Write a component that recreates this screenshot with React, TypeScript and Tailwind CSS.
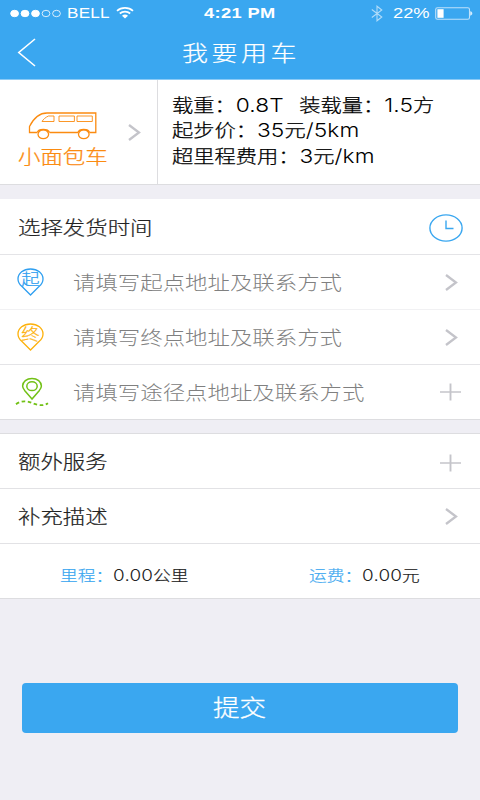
import type { ReactNode } from "react";

/* Wide lettering: glyphs are stretched horizontally from their left edge. */
function Wide({ className = "", children }: { className?: string; children: ReactNode }) {
  return (
    <span className={`inline-block origin-left scale-x-[1.18] whitespace-pre ${className}`}>{children}</span>
  );
}

function Num({ children }: { children: ReactNode }) {
  return <span className="text-[1.07em] leading-none tracking-[0.1px] [-webkit-text-stroke:0]">{children}</span>;
}

function Chevron() {
  return (
    <svg className="block h-[17px] w-[13px]" viewBox="0 0 13 17" fill="none" stroke="#c4c4ca" strokeWidth="2.3">
      <path d="M1 1L11 8.5L1 16" />
    </svg>
  );
}

function Plus() {
  return (
    <svg className="block h-[18px] w-[21px]" viewBox="0 0 21 18" fill="none" stroke="#c4c4ca">
      <path d="M0 9H21" strokeWidth="1.5" />
      <path d="M10.5 0.5V17.5" strokeWidth="1.9" />
    </svg>
  );
}

function Clock() {
  return (
    <svg className="block h-[28px] w-[34px]" viewBox="0 0 34 28" fill="none" stroke="#3aa7f0" strokeWidth="1.4">
      <ellipse cx="17" cy="14" rx="16.1" ry="13.1" />
      <path d="M17 6.5V14.5H24.5" />
    </svg>
  );
}

function LetterPin({ letter, color }: { letter: string; color: string }) {
  return (
    <svg className="block h-[28px] w-[27px]" viewBox="0 0 27 28" fill="none" stroke={color} strokeWidth="1.3">
      <path d="M13.5 27L5 18.6C2.4 16.4 1 14 1 11C1 5.2 6.5 1 13.5 1S26 5.2 26 11C26 14 24.6 16.4 22 18.6Z" />
      <text
        x="11.4"
        y="17.1"
        transform="scale(1.18 1)"
        textAnchor="middle"
        fill={color}
        stroke={color}
        strokeWidth="0.25"
        fontSize="15.5"
      >
        {letter}
      </text>
    </svg>
  );
}

function RoutePin() {
  return (
    <svg className="block h-[30px] w-[34px]" viewBox="0 0 34 30" fill="none" stroke="#72c116" strokeWidth="1.5">
      <path d="M17 22L9.6 13.4C8.3 11.8 7.6 10.7 7.6 9.1C7.6 4.7 11.7 1.4 17 1.4S26.4 4.7 26.4 9.1C26.4 10.7 25.7 11.8 24.4 13.4Z" />
      <ellipse cx="17" cy="9.2" rx="5.2" ry="4.4" />
      <path d="M1 27.2C6 23.5 12 23.8 17 26S28 29.5 33 26.2" strokeWidth="1.8" strokeDasharray="3.6 2.6" />
    </svg>
  );
}

function Van() {
  return (
    <svg className="block h-[29px] w-[69px]" viewBox="0 0 69 29" fill="none" stroke="#fb8b10" strokeWidth="1.3">
      <path d="M9 21.5H1.5V15.5C5 8.5 11 2 19 2H67.8V21.5H61.5M50 21.5H21.5" />
      <ellipse cx="15.3" cy="23.3" rx="5.3" ry="4.4" />
      <ellipse cx="55.8" cy="23.3" rx="5.3" ry="4.4" />
      <path d="M9.3 21.5C10.5 17.5 20 17.5 21.5 21.5M50 21.5C51.2 17.5 60.3 17.5 61.5 21.5" />
      <g strokeWidth="0.9">
        <path d="M26 5H20.5C17.5 6.3 15.3 8.3 14 10.5H26Z" />
        <path d="M31 5H46.4V10.5H31ZM49 5H64.3V10.5H49Z" />
      </g>
    </svg>
  );
}

function StatusBar() {
  return (
    <div className="flex h-[26px] items-center font-['Liberation_Sans'] text-[14px] leading-[26px]">
      <svg className="ml-[10px] h-[9px] w-[52px]" viewBox="0 0 52 9" fill="#fff" stroke="#fff">
        <ellipse cx="4.6" cy="4.5" rx="3.9" ry="3.2" />
        <ellipse cx="15" cy="4.5" rx="3.9" ry="3.2" />
        <ellipse cx="25.5" cy="4.5" rx="3.9" ry="3.2" />
        <g fill="none" strokeWidth="0.8">
          <ellipse cx="36" cy="4.5" rx="3.9" ry="3.2" />
          <ellipse cx="46.5" cy="4.5" rx="3.9" ry="3.2" />
        </g>
      </svg>
      <Wide className="ml-[5px] w-[49px] text-[14.5px] tracking-[0.2px]">BELL</Wide>
      <svg className="h-[12px] w-[18px]" viewBox="0 0 18 12" fill="none" stroke="#fff" strokeWidth="1.7">
        <path d="M1 3.8C5.3 0 12.7 0 17 3.8M3.8 6.5C6.8 4 11.2 4 14.2 6.5" />
        <path d="M6 8.8C7.8 7.2 10.2 7.2 12 8.8L9 11.5Z" fill="#fff" stroke="none" />
      </svg>
      <Wide className="ml-[70px] w-[167px] text-[15.5px] font-bold tracking-[0.3px]">4:21 PM</Wide>
      <svg className="h-[17px] w-[12px]" viewBox="0 0 12 17" fill="none" stroke="#fff" strokeWidth="1.1" opacity="0.6">
        <path d="M0.8 4.5L10.8 12L6 15.8V1.2L10.8 5L0.8 12.5" />
      </svg>
      <Wide className="ml-[10px] w-[42px] text-[15.5px]">22%</Wide>
      <svg className="h-[13px] w-[38px]" viewBox="0 0 38 13" fill="none">
        <rect x="0.7" y="0.7" width="33.8" height="11.6" rx="1.8" stroke="#bfe1fa" strokeWidth="1.1" />
        <rect x="2.4" y="2.2" width="6.2" height="8.6" fill="#fff" />
        <path d="M35.2 4.3C38 4.8 38 8.2 35.2 8.7Z" fill="#d5ecfc" />
      </svg>
    </div>
  );
}

function Row({ icon, label, action, border }: { icon: ReactNode; label: string; action: ReactNode; border: string }) {
  return (
    <div className={`flex h-[55px] items-center border-b ${border}`}>
      <div className="flex w-[73px] pl-[15px]">{icon}</div>
      <Wide className="mt-[4px] flex-none text-[19px] text-[#808080]">{label}</Wide>
      <div className="ml-auto flex w-[42px] justify-start">{action}</div>
    </div>
  );
}

export default function App() {
  return (
    <div className="flex h-[800px] w-[480px] flex-col overflow-hidden bg-[#efeef4] font-['Inter','Noto_Sans_CJK_SC',sans-serif] font-light">
      <header className="h-[80px] flex-none border-b border-[#8ccbf6] bg-[#3aa7f0] text-white">
        <StatusBar />
        <div className="flex h-[53px] items-center">
          <svg className="ml-[17px] h-[29px] w-[19px]" viewBox="0 0 19 29" fill="none" stroke="#fff" strokeWidth="1.6">
            <path d="M18 1L1.8 14.5L18 28" />
          </svg>
          <Wide className="mt-[2px] ml-[146px] text-[22px] tracking-[3px] [-webkit-text-stroke:0.2px_#fff]">我要用车</Wide>
        </div>
      </header>

      <section className="flex h-[105px] flex-none border-b border-[#dddde0] bg-white">
        <div className="flex w-[158px] items-center border-r border-[#dddde0]">
          <div className="w-[128px] pt-[21px] pl-[18px]">
            <div className="pl-[10px]">
              <Van />
            </div>
            <Wide className="text-[19px] leading-[35px] text-[#fb8b10] [-webkit-text-stroke:0.25px_#fb8b10]">小面包车</Wide>
          </div>
          <Chevron />
        </div>
        <div className="flex flex-col pt-[13px] pl-[13.5px] text-[18px] leading-[25.3px] text-black [-webkit-text-stroke:0.25px_#000]">
          <Wide>
            载重：<Num>0.8T</Num>
            <span className="inline-block w-[13px]" />
            装载量：<Num>1.5</Num>方
          </Wide>
          <Wide>
            起步价：<Num>35</Num>元<Num>/5km</Num>
          </Wide>
          <Wide>
            超里程费用：<Num>3</Num>元<Num>/km</Num>
          </Wide>
        </div>
      </section>

      <section className="mt-[14px] flex-none bg-white">
        <div className="flex h-[56px] items-center justify-between border-b border-[#e4e4e7] pt-[2px] pr-[17px] pl-[18px]">
          <Wide className="mt-[4px] text-[19px] text-[#222] [-webkit-text-stroke:0.2px_#222]">选择发货时间</Wide>
          <Clock />
        </div>
        <Row
          icon={<span className="pl-[2px]"><LetterPin letter="起" color="#2f9ff0" /></span>}
          label="请填写起点地址及联系方式"
          action={<span className="pl-[7px]"><Chevron /></span>}
          border="border-[#f1f1f3]"
        />
        <Row
          icon={<span className="pl-[2px]"><LetterPin letter="终" color="#fdb10b" /></span>}
          label="请填写终点地址及联系方式"
          action={<span className="pl-[7px]"><Chevron /></span>}
          border="border-[#e4e4e7]"
        />
        <Row icon={<RoutePin />} label="请填写途径点地址及联系方式" action={<span className="pl-[2px]"><Plus /></span>} border="border-[#dddde0]" />
      </section>

      <section className="mt-[13px] flex-none border-t border-[#dddde0] bg-white">
        <div className="flex h-[55px] items-center justify-between border-b border-[#e2e2e5] pt-[3px] pr-[19px] pl-[18px]">
          <Wide className="mt-px text-[19px] text-[#222] [-webkit-text-stroke:0.2px_#222]">额外服务</Wide>
          <Plus />
        </div>
        <div className="flex h-[55px] items-center justify-between border-b border-[#e2e2e5] pr-[22px] pl-[18px]">
          <Wide className="mt-[4px] text-[19px] text-[#222] [-webkit-text-stroke:0.2px_#222]">补充描述</Wide>
          <Chevron />
        </div>
        <div className="flex h-[55px] items-center border-b border-[#dddde0] pt-[11px] pl-[59.5px] text-[15px] text-[#222] [-webkit-text-stroke:0.2px_#222]">
          <Wide className="w-[249px]">
            <span className="text-[#3aa7f0] [-webkit-text-stroke:0.2px_#3aa7f0]">里程：</span>
            <Num>0.00</Num>公里
          </Wide>
          <Wide>
            <span className="text-[#3aa7f0] [-webkit-text-stroke:0.2px_#3aa7f0]">运费：</span>
            <Num>0.00</Num>元
          </Wide>
        </div>
      </section>

      <button className="mx-[22px] mt-[84px] flex h-[50px] flex-none items-center justify-center rounded-[4px] bg-[#3aa7f0] text-white">
        <span className="inline-block scale-x-[1.18] text-[22.5px] [-webkit-text-stroke:0.3px_#fff]">提交</span>
      </button>
    </div>
  );
}
